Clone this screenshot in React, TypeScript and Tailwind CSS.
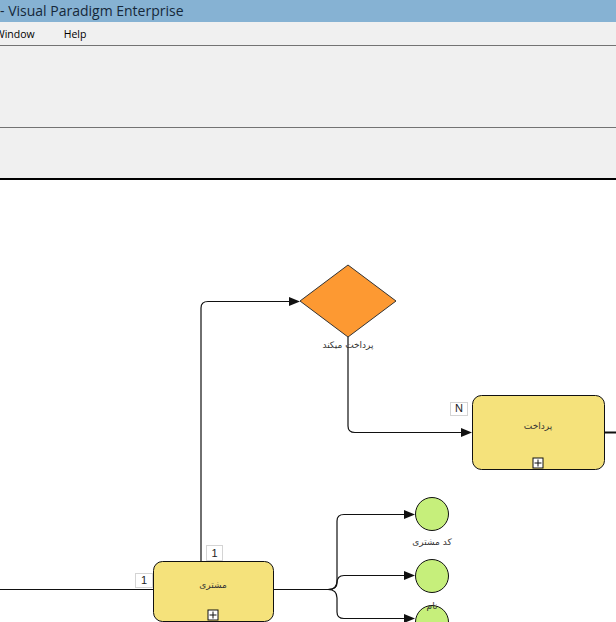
import React from "react";

const Arrow = ({ x, y }: { x: number; y: number }) => (
  <polygon points={`${x},${y} ${x - 11},${y - 4.5} ${x - 11},${y + 4.5}`} fill="#111" />
);

const Plus = ({ cx, cy }: { cx: number; cy: number }) => (
  <g>
    <rect x={cx - 5} y={cy - 5} width={10} height={10} fill="#fff" stroke="#111" strokeWidth={1} />
    <line x1={cx - 3.5} y1={cy} x2={cx + 3.5} y2={cy} stroke="#111" strokeWidth={1} />
    <line x1={cx} y1={cy - 3.5} x2={cx} y2={cy + 3.5} stroke="#111" strokeWidth={1} />
  </g>
);

const Tag = ({ x, y, w, h, t }: { x: number; y: number; w: number; h: number; t: string }) => (
  <g>
    <rect x={x + 0.5} y={y + 0.5} width={w} height={h} fill="#fff" stroke="#d4d4d4" strokeWidth={1} />
    <text x={x + w / 2 + 0.5} y={y + h - 3} textAnchor="middle" fontSize={11} fill="#222" fontFamily="'Liberation Sans', Arial, sans-serif">
      {t}
    </text>
  </g>
);

const fa = "'DejaVu Sans', 'Noto Sans', sans-serif";

export default function App() {
  return (
    <div className="w-[616px] h-[622px] overflow-hidden flex flex-col bg-white">
      <div className="h-[22px] bg-[#86b2d3] flex items-center shrink-0">
        <span className="text-[14px] leading-none text-[#15283a] whitespace-nowrap" style={{ fontFamily: "'Open Sans', 'Noto Sans', sans-serif" }}>
          - Visual Paradigm Enterprise
        </span>
      </div>
      <div className="h-[23px] bg-[#f0f0f0] flex items-center shrink-0 text-[10.5px] text-black pt-[2px]" style={{ fontFamily: "'Open Sans', 'Noto Sans', sans-serif" }}>
        <span className="ml-[-5px]">Window</span>
        <span className="ml-[29px]">Help</span>
      </div>
      <div className="h-[1px] bg-[#737373] shrink-0" />
      <div className="h-[81px] bg-[#f0f0f0] shrink-0" />
      <div className="h-[1px] bg-[#737373] shrink-0" />
      <div className="h-[50px] bg-[#f0f0f0] shrink-0" />
      <div className="h-[2px] bg-black shrink-0" />
      <div className="relative flex-1 bg-white">
        <svg className="absolute inset-0" width={616} height={442} viewBox="0 180 616 442">
          <g fill="none" stroke="#111" strokeWidth={1.2}>
            <path d="M201,561 L201,308 Q201,301.5 208,301.5 L290,301.5" />
            <path d="M348,337 L348,426 Q348,432.5 355,432.5 L462,432.5" />
            <path d="M605,432.5 L616,432.5" strokeWidth={2} />
            <path d="M0,589.5 L153,589.5" />
            <path d="M273,589.5 L328,589.5 Q337,589.5 337,581 L337,521 Q337,514.5 344,514.5 L405,514.5" />
            <path d="M328,589.5 Q337,589.5 337,583 Q337,575.5 344,575.5 L405,575.5" />
            <path d="M328,589.5 Q337,589.5 337,598 L337,612 Q337,618.5 344,618.5 L405,618.5" />
          </g>
          <Arrow x={300} y={301.5} />
          <Arrow x={472} y={432.5} />
          <Arrow x={415} y={514.5} />
          <Arrow x={415} y={575.5} />
          <Arrow x={415} y={618.5} />

          <polygon points="348,265 396,301 348,337 300,301" fill="#fd9932" stroke="#333" strokeWidth={1} />
          <text x={348} y={348} textAnchor="middle" fontSize={9} fill="#333" fontFamily={fa} direction="rtl">
            پرداخت میکند
          </text>

          <rect x={472.5} y={395.5} width={132} height={74} rx={9} fill="#f5e27b" stroke="#111" strokeWidth={1} />
          <text x={538} y={429} textAnchor="middle" fontSize={9} fill="#333" fontFamily={fa} direction="rtl">
            پرداخت
          </text>
          <Plus cx={538} cy={463} />
          <Tag x={450} y={402} w={17} h={13} t="N" />

          <rect x={153.5} y={561.5} width={120} height={60} rx={9} fill="#f5e27b" stroke="#111" strokeWidth={1} />
          <text x={213} y={588} textAnchor="middle" fontSize={9} fill="#333" fontFamily={fa} direction="rtl">
            مشتری
          </text>
          <Plus cx={213} cy={615} />
          <Tag x={206} y={545} w={16} h={15} t="1" />
          <Tag x={135} y={573} w={17} h={14} t="1" />

          <circle cx={432} cy={514} r={16.5} fill="#c6ef7b" stroke="#111" strokeWidth={1} />
          <text x={432} y={545} textAnchor="middle" fontSize={9} fill="#333" fontFamily={fa} direction="rtl">
            کد مشتری
          </text>
          <circle cx={432} cy={576} r={16.5} fill="#c6ef7b" stroke="#111" strokeWidth={1} />
          <circle cx={432} cy={622} r={16.5} fill="#c6ef7b" stroke="#111" strokeWidth={1} />
          <text x={432} y={609} textAnchor="middle" fontSize={9} fill="#333" fontFamily={fa} direction="rtl">
            نام
          </text>
        </svg>
      </div>
    </div>
  );
}
